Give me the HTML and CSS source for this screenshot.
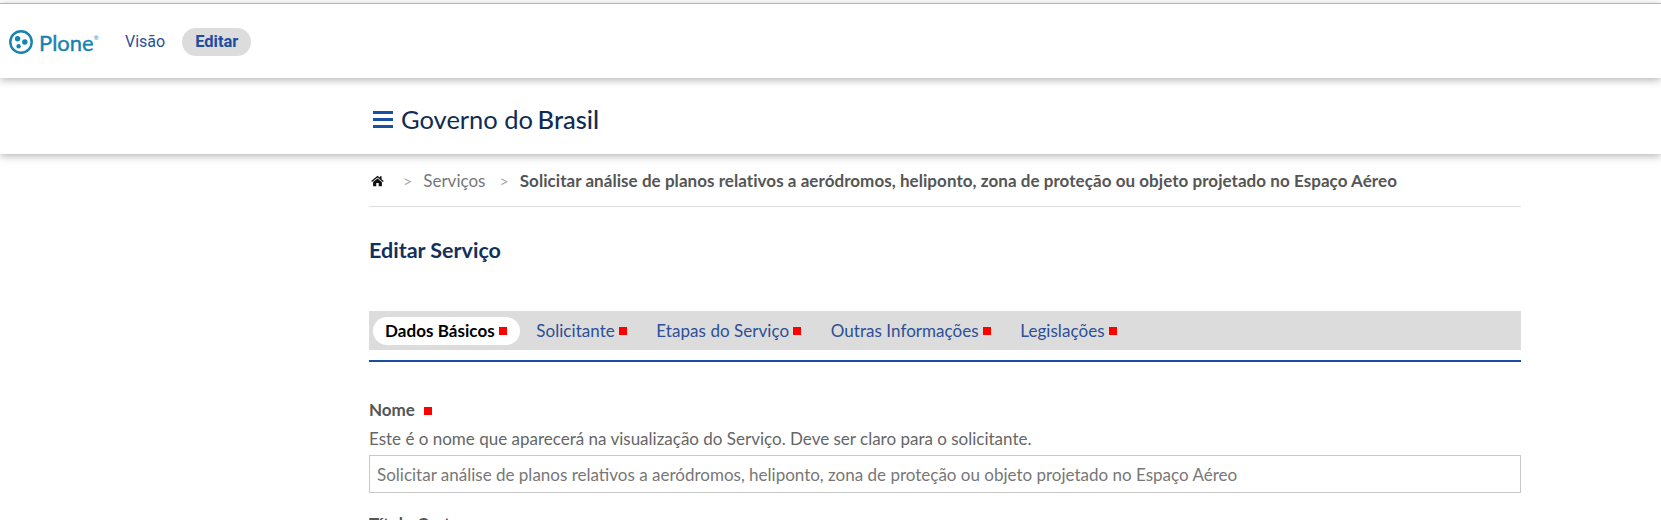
FILE: index.html
```html
<!DOCTYPE html>
<html lang="pt-BR">

<head>
    <meta charset="UTF-8" />
    <meta name="viewport" content="width=device-width, initial-scale=1.0" />
    <title>Editar Serviço</title>
    <link rel="stylesheet" href="styles.css">
</head>

<body>
    <div class="toolbar">
        <a class="plone-logo" href="#">
            <svg class="plone-icon" viewBox="0 0 24 24" width="24" height="24" aria-hidden="true">
                <circle cx="12" cy="12" r="10.7" fill="none" stroke="#1783b0" stroke-width="2.4" />
                <circle cx="8.6" cy="8.8" r="2.7" fill="#1783b0" />
                <circle cx="15.8" cy="12" r="2.7" fill="#1783b0" />
                <circle cx="9.6" cy="16.2" r="2.2" fill="#1783b0" />
            </svg>
            <span class="plone-name">Plone</span><span class="plone-reg">®</span>
        </a>
        <a class="toolbar-link" href="#">Visão</a>
        <a class="toolbar-link active" href="#">Editar</a>
    </div>

    <header class="site-header">
        <div class="container header-row">
            <span class="burger"><i></i><i></i><i></i></span>
            <span class="site-name">Governo do <strong>Brasil</strong></span>
        </div>
    </header>

    <main class="container">
        <nav class="breadcrumb">
            <svg class="home" viewBox="0 0 16 14" width="13" height="12" aria-hidden="true">
                <path d="M8 0.5 L0.3 7 L1.3 8.2 L8 2.6 L14.7 8.2 L15.7 7 L13 4.7 V1 H11 V3 Z" fill="#111" />
                <path d="M8 3.8 L2.6 8.3 V13.5 H6.5 V9.5 H9.5 V13.5 H13.4 V8.3 Z" fill="#111" />
            </svg>
            <span class="sep">&gt;</span>
            <a href="#">Serviços</a>
            <span class="sep">&gt;</span>
            <strong>Solicitar análise de planos relativos a aeródromos, heliponto, zona de proteção ou objeto projetado no Espaço Aéreo</strong>
        </nav>

        <h1>Editar Serviço</h1>

        <ul class="tabs">
            <li class="tab active">Dados Básicos<span class="req"></span></li>
            <li class="tab">Solicitante<span class="req"></span></li>
            <li class="tab">Etapas do Serviço<span class="req"></span></li>
            <li class="tab">Outras Informações<span class="req"></span></li>
            <li class="tab">Legislações<span class="req"></span></li>
        </ul>

        <form class="edit-form">
            <label class="field-label">Nome <span class="req"></span></label>
            <div class="help">Este é o nome que aparecerá na visualização do Serviço. Deve ser claro para o solicitante.</div>
            <input class="text-input" type="text" value="Solicitar análise de planos relativos a aeródromos, heliponto, zona de proteção ou objeto projetado no Espaço Aéreo" />
            <label class="field-label next">Título Curto</label>
        </form>
    </main>
</body>

</html>
```
FILE: styles.css
```css
html,
body {
    height: 520px;
    overflow: hidden;
}

body {
    font-family: 'Lato', sans-serif;
    background: #fff;
    margin: 0;
    color: #555;
    font-size: 17px;
}

a {
    text-decoration: none;
}

.container {
    width: 1152px;
    margin-left: 369px;
}

.toolbar {
    display: flex;
    align-items: center;
    height: 72px;
    padding-top: 2px;
    margin-top: 3px;
    border-top: 1px solid #b5b5b5;
    background: #fff;
    box-shadow: 0 2px 8px rgba(0, 0, 0, 0.3);
    position: relative;
    z-index: 2;
}

.plone-logo {
    display: flex;
    align-items: center;
    margin-left: 9px;
    width: 103px;
    color: #1783b0;
}

.plone-name {
    font-size: 22px;
    margin-left: 6px;
    -webkit-text-stroke: 0.4px #1783b0;
}

.plone-reg {
    font-size: 6px;
    align-self: flex-start;
    margin-top: 5px;
}

.toolbar-link {
    font-family: 'Roboto', sans-serif;
    font-size: 16px;
    color: #2c4f96;
    padding: 0 13px;
    line-height: 28px;
    border-radius: 14px;
    margin-right: 4px;
}

.toolbar-link.active {
    background: #dcdcdc;
    color: #1e4c9f;
    font-size: 16.5px;
    font-weight: 700;
}

.site-header {
    height: 76px;
    background: #fff;
    box-shadow: 0 2px 8px rgba(0, 0, 0, 0.3);
    position: relative;
    z-index: 1;
}

.header-row {
    display: flex;
    align-items: center;
    height: 76px;
}

.burger {
    display: flex;
    flex-direction: column;
    gap: 4px;
    width: 20px;
    margin-top: 7px;
    margin-left: 4px;
    margin-right: 8px;
}

.burger i {
    display: block;
    height: 3px;
    background: #1d4f9f;
}

.site-name {
    font-size: 25.5px;
    color: #0f2c52;
    padding-top: 5px;
}

.site-name strong {
    font-weight: 500;
    margin-left: -2px;
}

.breadcrumb {
    display: flex;
    align-items: center;
    box-sizing: border-box;
    height: 53px;
    padding-top: 1px;
    border-bottom: 1px solid #ddd;
    white-space: nowrap;
}

.breadcrumb a {
    color: #777;
}

.breadcrumb .home {
    margin-left: 2px;
    margin-right: 2px;
}

.breadcrumb strong {
    font-weight: 700;
    color: #555;
    letter-spacing: 0.05px;
}

.sep {
    color: #aaa;
    font-size: 16px;
    margin: 0 11px 0 17px;
}

.breadcrumb a + .sep {
    margin-left: 14px;
}

h1 {
    margin: 30px 0 0;
    font-size: 21.5px;
    line-height: 26px;
    font-weight: 700;
    color: #13305c;
}

.tabs {
    display: flex;
    align-items: center;
    list-style: none;
    margin: 48px 0 0;
    padding: 0 4px;
    height: 39px;
    background: #dcdcdc;
    position: relative;
}

.tabs::after {
    content: '';
    position: absolute;
    left: 0;
    right: 0;
    bottom: -12px;
    height: 2px;
    background: #1d4f9f;
}

.tab {
    display: flex;
    align-items: center;
    height: 28px;
    padding: 0 13.5px 0 12px;
    margin-right: 4px;
    color: #2c4f96;
    border-radius: 14px;
    letter-spacing: 0.05px;
}

.tab.active {
    background: #fff;
    color: #000;
    font-weight: 700;
}

.req {
    display: inline-block;
    width: 8px;
    height: 8px;
    margin-left: 4px;
    background: #f00;
}

.edit-form {
    margin-top: 50px;
}

.field-label {
    display: block;
    font-weight: 700;
    color: #555;
    line-height: 20px;
}

.field-label .req {
    margin-left: 5px;
    vertical-align: 1px;
}

.help {
    margin-top: 9px;
    line-height: 20px;
    color: #666;
    font-size: 17px;
}

.text-input {
    display: block;
    box-sizing: border-box;
    width: 100%;
    height: 38px;
    margin-top: 6px;
    padding: 0 7px;
    border: 1px solid #c8c8c8;
    font: inherit;
    color: #777;
}

.field-label.next {
    margin-top: 21px;
}
```
